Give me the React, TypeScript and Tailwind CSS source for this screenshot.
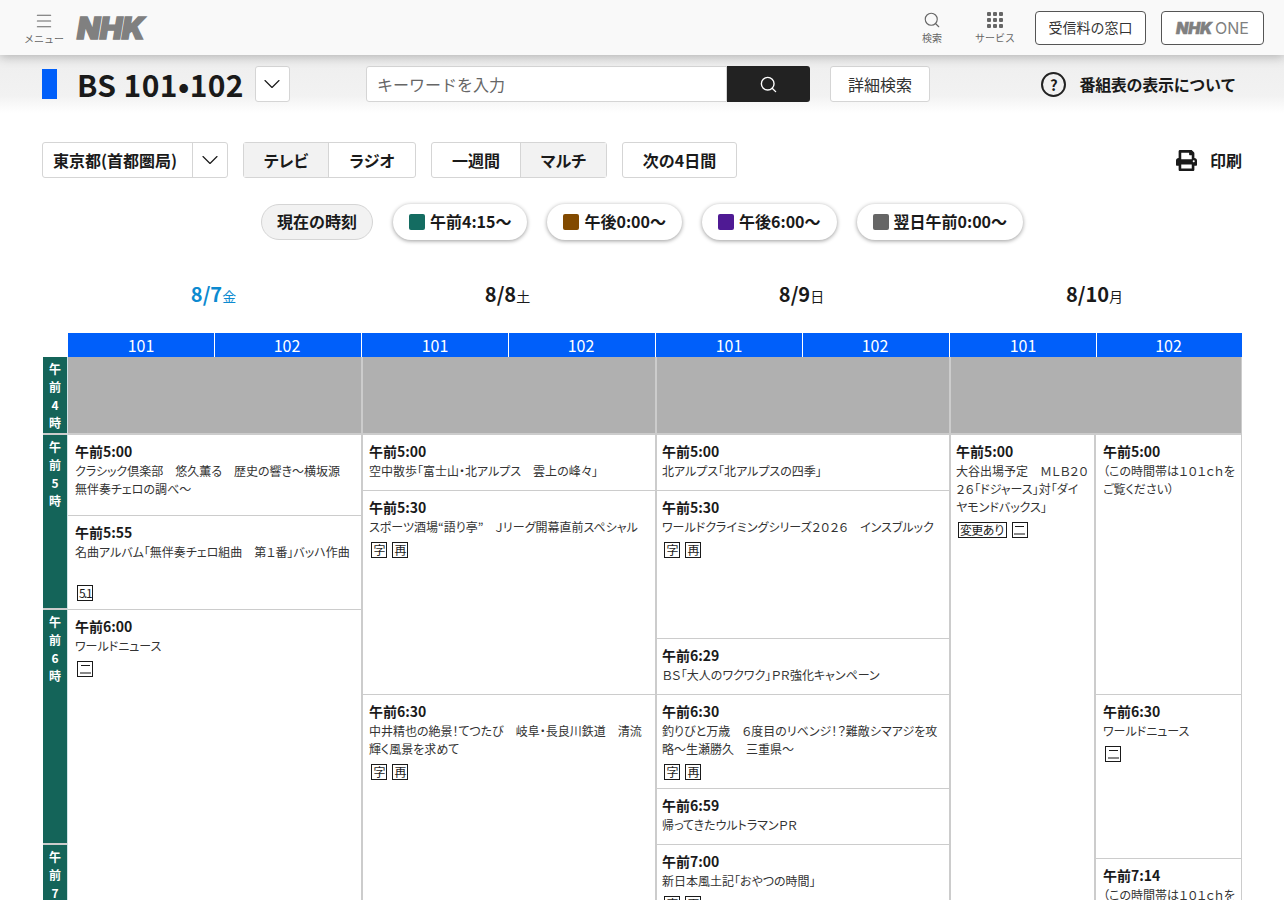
import React from 'react';
import { ChevronDown, Menu, Search } from 'lucide-react';
import { FaPrint } from 'react-icons/fa';

type Program = { time: string; title: string; height: string; badges?: string[] };

const hours = [
  { label: ['午', '前', '4', '時'], height: 'h-[78px]' },
  { label: ['午', '前', '5', '時'], height: 'h-[175px]' },
  { label: ['午', '前', '6', '時'], height: 'h-[235px]' },
  { label: ['午', '前', '7', '時'], height: 'h-[200px]' },
];

const day1: Program[] = [
  { time: '午前5:00', title: 'クラシック倶楽部　悠久薫る　歴史の響き〜横坂源　無伴奏チェロの調べ〜', height: 'h-[81px]' },
  { time: '午前5:55', title: '名曲アルバム「無伴奏チェロ組曲　第１番」バッハ作曲', height: 'h-[94px]', badges: ['spacer', '5.1'] },
  { time: '午前6:00', title: 'ワールドニュース', height: 'h-[400px]', badges: ['二'] },
];

const day2: Program[] = [
  { time: '午前5:00', title: '空中散歩「富士山・北アルプス　雲上の峰々」', height: 'h-[56px]' },
  { time: '午前5:30', title: 'スポーツ酒場“語り亭”　Ｊリーグ開幕直前スペシャル', height: 'h-[204px]', badges: ['字', '再'] },
  { time: '午前6:30', title: '中井精也の絶景！てつたび　岐阜・長良川鉄道　清流輝く風景を求めて', height: 'h-[300px]', badges: ['字', '再'] },
];

const day3: Program[] = [
  { time: '午前5:00', title: '北アルプス「北アルプスの四季」', height: 'h-[56px]' },
  { time: '午前5:30', title: 'ワールドクライミングシリーズ２０２６　インスブルック', height: 'h-[148px]', badges: ['字', '再'] },
  { time: '午前6:29', title: 'ＢＳ「大人のワクワク」ＰＲ強化キャンペーン', height: 'h-[56px]' },
  { time: '午前6:30', title: '釣りびと万歳　６度目のリベンジ！？難敵シマアジを攻略〜生瀬勝久　三重県〜', height: 'h-[94px]', badges: ['字', '再'] },
  { time: '午前6:59', title: '帰ってきたウルトラマンＰＲ', height: 'h-[56px]' },
  { time: '午前7:00', title: '新日本風土記「おやつの時間」', height: 'h-[200px]', badges: ['字', '再'] },
];

const day4a: Program[] = [
  { time: '午前5:00', title: '大谷出場予定　ＭＬＢ２０２６「ドジャース」対「ダイヤモンドバックス」', height: 'h-[600px]', badges: ['変更あり', '二'] },
];

const day4b: Program[] = [
  { time: '午前5:00', title: '（この時間帯は１０１ｃｈをご覧ください）', height: 'h-[260px]' },
  { time: '午前6:30', title: 'ワールドニュース', height: 'h-[164px]', badges: ['二'] },
  { time: '午前7:14', title: '（この時間帯は１０１ｃｈをご覧ください）', height: 'h-[200px]' },
];

const pills = [
  { label: '午前4:15〜', color: 'bg-[#146c61]' },
  { label: '午後0:00〜', color: 'bg-[#824a00]' },
  { label: '午後6:00〜', color: 'bg-[#4f1a94]' },
  { label: '翌日午前0:00〜', color: 'bg-[#666666]' },
];

const dates = [
  { date: '8/7', day: '金', color: 'text-[#0c8ad0]' },
  { date: '8/8', day: '土', color: 'text-[#1a1a1a]' },
  { date: '8/9', day: '日', color: 'text-[#1a1a1a]' },
  { date: '8/10', day: '月', color: 'text-[#1a1a1a]' },
];

const Badge = ({ kind }: { kind: string }) => {
  if (kind === 'spacer') return <span className="block h-[18px] w-full" />;
  if (kind === '二') {
    return (
      <span className="flex h-[16px] w-[16px] flex-col items-center border border-[#1a1a1a] pt-[3px]">
        <span className="h-px w-[9px] bg-[#1a1a1a]" />
        <span className="mt-[6px] h-[2px] w-[11px] bg-[#888888]" />
      </span>
    );
  }
  if (kind === '5.1') {
    return (
      <span className="flex h-[16px] w-[16px] items-center justify-center overflow-hidden border border-[#1a1a1a] text-[12px] leading-none tracking-[-1.5px] text-[#1a1a1a]">
        5.1
      </span>
    );
  }
  return (
    <span className="flex h-[16px] min-w-[16px] items-center justify-center border border-[#1a1a1a] px-px text-[12px] leading-none tracking-[-0.8px] text-[#1a1a1a]">
      {kind}
    </span>
  );
};

const ProgramCell = ({ p, pad = 'pl-[7px]' }: { p: Program; pad?: string }) => (
  <div className={`${p.height} ${pad} shrink-0 overflow-hidden border-b border-[#cccccc] bg-white pr-[5px] pt-[6px]`}>
    <div className="mb-px text-[14px] font-bold leading-[20px] text-[#1a1a1a]">{p.time}</div>
    <div className="text-[12px] leading-[18px] text-[#333333] [font-feature-settings:'palt']">{p.title}</div>
    {p.badges && (
      <div className="mt-[6px] flex flex-wrap gap-x-[5px] pl-[2px]">
        {p.badges.map((b) => (
          <Badge key={b} kind={b} />
        ))}
      </div>
    )}
  </div>
);

const Gray = () => <div className="h-[78px] border-b-2 border-[#cccccc] bg-[#b0b0b0]" />;

const App = () => {
  return (
    <div className="h-screen overflow-hidden bg-white font-['Noto_Sans_CJK_JP','Noto_Sans',sans-serif] text-[#1a1a1a]">
      {/* Global header */}
      <header className="relative z-10 flex h-[55px] items-center bg-[#f9f9f9] pl-[24px] pr-[20px] shadow-[0_2px_10px_rgba(0,0,0,0.25)]">
        <button className="flex w-[40px] flex-col items-center text-[#666666]">
          <Menu className="h-[20px] w-[20px]" strokeWidth={1.25} />
          <span className="mt-[2px] whitespace-nowrap text-[10px] leading-[12px]">メニュー</span>
        </button>
        <span className="ml-[13px] font-['Inter',sans-serif] text-[30px] font-black italic leading-none tracking-[-0.4px] text-[#808080] [-webkit-text-stroke:1.5px_#808080]">
          NHK
        </span>
        <div className="ml-auto flex items-center">
          <button className="flex flex-col items-center text-[#666666]">
            <Search className="h-[18px] w-[18px]" strokeWidth={1.5} />
            <span className="mt-[3px] text-[10px] leading-[12px]">検索</span>
          </button>
          <button className="ml-[33px] flex flex-col items-center text-[#666666]">
            <span className="grid h-[18px] w-[16px] grid-cols-3 content-center gap-[2px]">
              {[0, 1, 2, 3, 4, 5, 6, 7, 8].map((i) => (
                <span key={i} className="h-[4px] w-[4px] rounded-[1px] bg-[#666666]" />
              ))}
            </span>
            <span className="mt-[3px] whitespace-nowrap text-[10px] leading-[12px]">サービス</span>
          </button>
          <button className="ml-[20px] flex h-[34px] w-[111px] items-center justify-center rounded-[4px] border border-[#555555] bg-white text-[14px] text-[#333333]">
            受信料の窓口
          </button>
          <button className="ml-[15px] flex h-[34px] w-[103px] items-center justify-center gap-[3px] rounded-[4px] border border-[#555555] bg-white text-[#808080]">
            <span className="font-['Inter',sans-serif] text-[16px] font-black italic tracking-[-0.2px] [-webkit-text-stroke:0.5px_#808080]">NHK</span>
            <span className="font-['Inter',sans-serif] text-[16px]">ONE</span>
          </button>
        </div>
      </header>

      {/* Channel and search bar */}
      <div className="flex h-[58px] items-center bg-linear-to-b from-[#eeeeee] via-[#f2f2f2] via-70% to-[#ffffff] pl-[42px] pr-[48px]">
        <span className="h-[30px] w-[15px] bg-[#005ffa]" />
        <h1 className="ml-[20px] text-[30px] font-bold leading-none tracking-[0.4px]">BS 101•102</h1>
        <button className="ml-[11px] flex h-[36px] w-[35px] items-center justify-center rounded-[3px] border border-[#d5d5d5] bg-white">
          <ChevronDown className="h-[28px] w-[28px]" strokeWidth={1} />
        </button>
        <div className="ml-[76px] flex h-[36px]">
          <div className="flex w-[361px] items-center rounded-l-[3px] border border-[#d5d5d5] bg-white pl-[10px] text-[16px] text-[#666666]">
            キーワードを入力
          </div>
          <button className="flex w-[83px] items-center justify-center rounded-r-[3px] bg-[#222222] text-white">
            <Search className="h-[19px] w-[19px]" strokeWidth={1.75} />
          </button>
        </div>
        <button className="ml-[20px] flex h-[36px] w-[100px] items-center justify-center rounded-[3px] border border-[#d5d5d5] bg-white text-[16px] text-[#333333]">
          詳細検索
        </button>
        <div className="ml-auto flex items-center">
          <span className="flex h-[25px] w-[25px] items-center justify-center rounded-full border-2 border-[#222222] text-[15px] font-bold leading-none">?</span>
          <span className="ml-[13px] text-[16px] font-bold tracking-[-0.3px]">番組表の表示について</span>
        </div>
      </div>

      {/* Toolbar */}
      <div className="mt-[29px] flex h-[36px] items-stretch px-[42px] text-[16px] font-bold">
        <div className="flex w-[186px] rounded-[3px] border border-[#d5d5d5]">
          <span className="flex flex-1 items-center border-r border-[#d5d5d5] pl-[10px]">東京都(首都圏局)</span>
          <span className="flex w-[34px] items-center justify-center">
            <ChevronDown className="h-[28px] w-[28px]" strokeWidth={1} />
          </span>
        </div>
        <div className="ml-[15px] flex w-[173px] rounded-[3px] border border-[#d5d5d5]">
          <span className="flex w-[85px] items-center justify-center border-r border-[#d5d5d5] bg-[#f2f2f2] [font-feature-settings:'palt']">テレビ</span>
          <span className="flex flex-1 items-center justify-center [font-feature-settings:'palt']">ラジオ</span>
        </div>
        <div className="ml-[15px] flex w-[176px] rounded-[3px] border border-[#d5d5d5]">
          <span className="flex w-[89px] items-center justify-center border-r border-[#d5d5d5]">一週間</span>
          <span className="flex flex-1 items-center justify-center bg-[#f2f2f2] [font-feature-settings:'palt']">マルチ</span>
        </div>
        <div className="ml-[15px] flex w-[115px] items-center justify-center rounded-[3px] border border-[#d5d5d5]">次の4日間</div>
        <div className="ml-auto flex items-center">
          <FaPrint className="h-[21px] w-[21px]" />
          <span className="ml-[13px]">印刷</span>
        </div>
      </div>

      {/* Time jump pills */}
      <div className="mt-[26px] flex h-[36px] justify-center gap-[20px] text-[16px] font-bold">
        <span className="flex w-[112px] items-center justify-center rounded-full border border-[#d5d5d5] bg-[#f2f2f2] pb-[2px]">現在の時刻</span>
        {pills.map((pill) => (
          <span key={pill.label} className="flex items-center gap-[5px] rounded-full bg-white px-[16px] pb-[2px] shadow-[0_1px_4px_rgba(0,0,0,0.4)]">
            <span className={`mt-[2px] h-[16px] w-[16px] rounded-[2px] ${pill.color}`} />
            {pill.label}
          </span>
        ))}
      </div>

      {/* Date heads */}
      <div className="ml-[68px] mr-[42px] mt-[36px] grid h-[35px] grid-cols-[294px_294px_294px_1fr]">
        {dates.map((d) => (
          <div key={d.date} className={`flex items-baseline justify-center pr-[3px] ${d.color}`}>
            <span className="text-[20px] font-bold leading-[35px]">{d.date}</span>
            <span className="text-[14px]">{d.day}</span>
          </div>
        ))}
      </div>

      {/* Channel heads */}
      <div className="ml-[68px] mr-[42px] mt-[22px] grid h-[24px] grid-cols-[294px_294px_294px_1fr]">
        {dates.map((d, i) => (
          <div key={d.date} className={`grid grid-cols-[146px_1fr] gap-x-px ${i < 3 ? 'pr-px' : ''}`}>
            {['101', '102'].map((ch) => (
              <span key={ch} className={`flex items-center justify-center bg-[#005ffa] pb-[1px] text-[16px] leading-none text-white ${ch === '102' ? 'pr-[2px]' : ''}`}>
                {ch}
              </span>
            ))}
          </div>
        ))}
      </div>

      {/* Schedule grid */}
      <div className="ml-[43px] mr-[42px] flex">
        <div className="w-[25px] shrink-0 border-r border-[#cfe3e6]">
          {hours.map((h) => (
            <div key={h.label[2]} className={`${h.height} border-b-2 border-[#cccccc] bg-[#146459] pt-[3px] text-center text-[12px] font-bold leading-[18px] text-white`}>
              {h.label.map((c) => (
                <div key={c}>{c}</div>
              ))}
            </div>
          ))}
        </div>
        <div className="grid flex-1 grid-cols-[293px_294px_294px_1fr]">
          <div>
            <Gray />
            {day1.map((p) => (
              <ProgramCell key={p.time} p={p} />
            ))}
          </div>
          <div className="border-l-2 border-[#cccccc]">
            <Gray />
            {day2.map((p) => (
              <ProgramCell key={p.time} p={p} pad="pl-[6px]" />
            ))}
          </div>
          <div className="border-l-2 border-[#cccccc]">
            <Gray />
            {day3.map((p) => (
              <ProgramCell key={p.time} p={p} pad="pl-[5px]" />
            ))}
          </div>
          <div className="border-l-2 border-r border-[#cccccc]">
            <Gray />
            <div className="grid grid-cols-[145px_1fr]">
              <div className="border-r-2 border-[#cccccc]">
                {day4a.map((p) => (
                  <ProgramCell key={p.time} p={p} pad="pl-[5px]" />
                ))}
              </div>
              <div>
                {day4b.map((p) => (
                  <ProgramCell key={p.time} p={p} />
                ))}
              </div>
            </div>
          </div>
        </div>
      </div>
    </div>
  );
};

export default App;
